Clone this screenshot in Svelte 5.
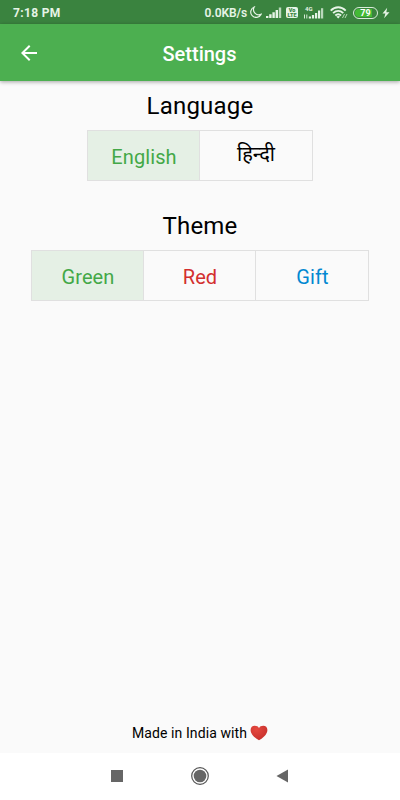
<script lang="ts">
  let language = $state('en');
  let theme = $state('green');

  const languages = [
    { id: 'en', label: 'English' },
    { id: 'hi', label: 'हिन्दी' },
  ];

  const themes = [
    { id: 'green', label: 'Green' },
    { id: 'red', label: 'Red' },
    { id: 'gift', label: 'Gift' },
  ];
</script>

<div class="screen">
  <div class="status">
    <span class="time">7:18 PM</span>
    <span class="speed">0.0KB/s</span>
    <svg class="moon" width="13" height="13" viewBox="0 0 13 13">
      <path d="M5.2 1A5.4 5.4 0 1 0 12 8.4A5.3 5.3 0 0 1 5.2 1Z" />
    </svg>
    <svg class="signal" width="16" height="11" viewBox="0 0 16 11">
      <path d="M0 9h2.4v2H0zM3.2 7.3h2.4V11H3.2zM6.4 5.300h2.400V11H6.400zM9.600 3H12v8H9.600z" />
      <path d="M12.800.5h2.400V11h-2.400z" opacity=".75" />
    </svg>
    <span class="volte"><span>Vo</span><span>LTE</span></span>
    <span class="mobile">
      <span class="net">4G</span>
      <svg width="20" height="12" viewBox="0 0 20 12">
        <path d="M.5 7.5v4M2.8 7.5v4" stroke="#d9ecd9" stroke-width="1" />
        <path d="M4.8 9.5h2.200v2H4.800zM7.900 8h2.200v3.500H7.900zM11 6h2.200v5.500H11zM14 3.500h2.200v8H14z" />
        <path d="M17 1.200h2.200v10.300H17z" opacity=".75" />
      </svg>
    </span>
    <svg class="wifi" width="18" height="13" viewBox="0 0 18 13">
      <g fill="none" stroke="#e6f4e6" stroke-width="1.9">
        <path d="M.7 4.600C5.200.2 11.200.2 15.700 4.600" />
        <path d="M3.100 7.100C6.200 4.200 10.200 4.200 13.300 7.100" />
        <path d="M5.300 9.500C7 7.900 9.400 7.900 11.100 9.500" />
      </g>
      <path d="M8.200 12.500L6.300 10.600Q8.200 9.300 10.100 10.600Z" />
      <path d="M12.500 12l2-4M15 12l2-4" stroke="#b8dcb8" stroke-width="1" />
    </svg>
    <span class="battery"><span>79</span></span>
    <svg class="bolt" width="8" height="12" viewBox="0 0 8 12">
      <path d="M5.2 0.8L0.5 6.5H3.4L2.1 11.2L7.5 5.2H4.3Z" />
    </svg>
  </div>

  <header>
    <button class="back" aria-label="Back">
      <svg width="24" height="24" viewBox="0 0 24 24">
        <path d="M20 11H7.83l5.59-5.59L12 4l-8 8 8 8 1.41-1.41L7.83 13H20v-2z" />
      </svg>
    </button>
    <h1>Settings</h1>
  </header>

  <main>
    <section>
      <h2>Language</h2>
      <div class="toggles">
        {#each languages as item}
          <button
            class={item.id}
            class:selected={language === item.id}
            onclick={() => (language = item.id)}
          >
            {item.label}
          </button>
        {/each}
      </div>
    </section>

    <section>
      <h2>Theme</h2>
      <div class="toggles">
        {#each themes as item}
          <button
            class={item.id}
            class:selected={theme === item.id}
            onclick={() => (theme = item.id)}
          >
            {item.label}
          </button>
        {/each}
      </div>
    </section>
  </main>

  <footer>
    <span>Made in India with</span>
    <svg width="18" height="16" viewBox="0 0 18 16">
      <defs>
        <radialGradient id="heart" cx=".35" cy=".25" r=".8">
          <stop offset="0" stop-color="#e5483f" />
          <stop offset="1" stop-color="#c62f2b" />
        </radialGradient>
      </defs>
      <path
        fill="url(#heart)"
        d="M9 15.2C6 13.6.6 9.6.6 4.9C.6 2.4 2.4.8 4.7.8C6.7.8 8.3 1.5 9 3.2C9.7 1.5 11.3.8 13.3.8C15.6.8 17.4 2.4 17.4 4.9C17.4 9.6 12 13.6 9 15.2Z"
      />
    </svg>
  </footer>

  <nav>
    <svg width="14" height="14" viewBox="0 0 14 14"><path d="M1 1h12v12H1z" /></svg>
    <svg width="20" height="20" viewBox="0 0 20 20">
      <circle cx="10" cy="10" r="8.3" fill="none" stroke="#555" stroke-width="1.2" />
      <circle cx="10" cy="10" r="6.3" />
    </svg>
    <svg width="14" height="14" viewBox="0 0 14 14"><path d="M12 .5v13L.5 7z" /></svg>
  </nav>
</div>

<style>
  :global(body) {
    margin: 0;
  }
  .screen {
    display: flex;
    flex-direction: column;
    width: 400px;
    height: 800px;
    overflow: hidden;
    background: #fafafa;
    color: #000;
    font-family: Roboto, "Noto Sans", sans-serif;
  }
  button {
    border: 0;
    padding: 0;
    background: none;
    font: inherit;
  }
  svg {
    display: block;
    flex: none;
  }

  .status {
    display: flex;
    align-items: center;
    height: 24px;
    padding: 1px 10px 0 13px;
    box-sizing: border-box;
    background: #3a833f;
    color: #e6f4e6;
    fill: #e6f4e6;
    white-space: nowrap;
  }
  .time {
    font-size: 12px;
    font-weight: 700;
    letter-spacing: 0.35px;
    margin-right: auto;
  }
  .speed {
    font-size: 12px;
    font-weight: 600;
    letter-spacing: -0.1px;
  }
  .moon {
    margin-left: 2px;
    fill: none;
    stroke: #e6f4e6;
    stroke-width: 1.2;
  }
  .signal {
    margin-left: 4px;
  }
  .volte {
    display: flex;
    flex-direction: column;
    align-items: center;
    justify-content: center;
    width: 12px;
    height: 11px;
    margin-left: 4px;
    border-radius: 2px;
    background: #e6f4e6;
    color: #3a833f;
    font-size: 5.5px;
    font-weight: 900;
    line-height: 5px;
  }
  .mobile {
    position: relative;
    margin-left: 6px;
  }
  .net {
    position: absolute;
    left: 1px;
    top: -1px;
    font-size: 6px;
    font-weight: 700;
    line-height: 6px;
  }
  .wifi {
    margin-left: 6px;
  }
  .battery {
    display: flex;
    width: 25px;
    height: 12px;
    margin-left: 5px;
    padding: 1px;
    box-sizing: border-box;
    border: 1px solid #d9ecd9;
    border-radius: 6px;
  }
  .battery span {
    flex: 1;
    border-radius: 4px;
    background: linear-gradient(to right, #43b935 80%, #3a833f 80%);
    color: #fff;
    font-size: 9px;
    font-weight: 700;
    line-height: 9px;
    text-align: center;
  }
  .bolt {
    margin-left: 4px;
  }

  header {
    display: grid;
    grid-template-columns: 57px 1fr 58px;
    align-items: center;
    height: 57px;
    flex: none;
    background: #4caf50;
    color: #fff;
    box-shadow: 0 1px 4px rgba(0, 0, 0, 0.35);
  }
  .back {
    display: flex;
    justify-content: center;
    fill: #fff;
  }
  h1 {
    margin: 0;
    padding-top: 2px;
    font-size: 20px;
    font-weight: 500;
    line-height: 24px;
    text-align: center;
  }

  main {
    flex: 1;
  }
  section {
    display: flex;
    flex-direction: column;
    align-items: center;
    height: 120px;
  }
  h2 {
    margin: 0;
    padding: 11px 0 10px;
    font-size: 24px;
    font-weight: 400;
    letter-spacing: 0.2px;
    line-height: 28px;
  }
  .toggles {
    display: flex;
    border: 1px solid #e0e0e0;
  }
  .toggles button {
    width: 112px;
    height: 49px;
    box-sizing: border-box;
    padding: 2px 0 0 1px;
    font-size: 20px;
    letter-spacing: 0.1px;
    line-height: 24px;
  }
  .toggles button:not(:last-child) {
    border-right: 1px solid #e0e0e0;
  }
  .toggles .selected {
    background: #e5f0e5;
  }
  .en,
  .green {
    color: #43a847;
  }
  .toggles .hi {
    padding: 0 0 3px;
    color: #000;
  }
  .red {
    color: #d32f2f;
  }
  .gift {
    color: #0288d1;
  }

  footer {
    display: flex;
    justify-content: center;
    align-items: center;
    gap: 3px;
    height: 40px;
    font-size: 14px;
    letter-spacing: 0.1px;
  }

  nav {
    display: flex;
    justify-content: center;
    align-items: center;
    gap: 66px;
    height: 47px;
    padding-bottom: 2px;
    box-sizing: border-box;
    flex: none;
    background: #fff;
    fill: #666;
  }
</style>
